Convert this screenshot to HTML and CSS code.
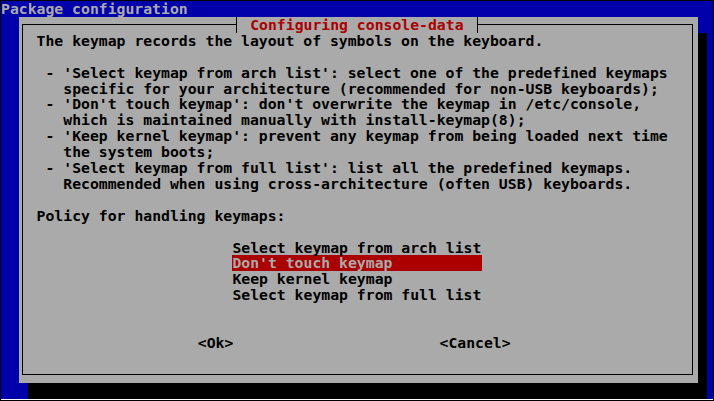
FILE: index.html
```html
<!DOCTYPE html>
<html>
<head>
<meta charset="utf-8">
<link rel="stylesheet" href="styles.css">
</head>
<body>
<div class="screen">
  <div class="backtitle">Package configuration</div>
  <div class="dialog">
    <div class="frame">
      <div class="dtitle">Configuring console-data</div>
      <div class="text">The keymap records the layout of symbols on the keyboard.

 - 'Select keymap from arch list': select one of the predefined keymaps
   specific for your architecture (recommended for non-USB keyboards);
 - 'Don't touch keymap': don't overwrite the keymap in /etc/console,
   which is maintained manually with install-keymap(8);
 - 'Keep kernel keymap': prevent any keymap from being loaded next time
   the system boots;
 - 'Select keymap from full list': list all the predefined keymaps.
   Recommended when using cross-architecture (often USB) keyboards.

Policy for handling keymaps:</div>
      <ul class="menu">
        <li>Select keymap from arch list</li>
        <li class="sel">Don't touch keymap</li>
        <li>Keep kernel keymap</li>
        <li>Select keymap from full list</li>
      </ul>
      <div class="buttons">
        <span class="btn">&lt;Ok&gt;</span>
        <span class="btn">&lt;Cancel&gt;</span>
      </div>
    </div>
  </div>
</div>
<div class="edge"></div>
</body>
</html>
```
FILE: styles.css
```css
html, body {
  margin: 0;
  padding: 0;
  background: #000;
}
body {
  width: 714px;
  height: 401px;
  padding-top: 1px;
  padding-left: 1px;
  box-sizing: border-box;
  overflow: hidden;
  font-family: "DejaVu Sans Mono", monospace;
  font-weight: bold;
  font-size: 14.783px;
  line-height: 15.9px;
}
.screen {
  width: 712px;
  height: 398px;
  background: #0000aa;
  overflow: hidden;
}
.edge {
  width: 712px;
  height: 1px;
  background: #ffffff;
}
.backtitle {
  height: 15.9px;
  color: #aaaaaa;
  white-space: pre;
}
.dialog {
  margin-left: 18px;
  width: 679px;
  height: 366px;
  background: #aaaaaa;
  box-shadow: 9px 16px 0 #000;
  padding-top: 7px;
  box-sizing: border-box;
}
.frame {
  position: relative;
  margin: 0 5px 0 3px;
  height: 351px;
  box-sizing: border-box;
  border: 1px solid #000;
  padding: 7.9px 0 0 13.6px;
}
.dtitle {
  position: absolute;
  top: -8px;
  left: 213px;
  width: 226.8px;
  height: 15.9px;
  padding-left: 13.2px;
  box-sizing: content-box;
  border-left: 1px solid #000;
  border-right: 1px solid #000;
  background: #aaaaaa;
  color: #aa0000;
  white-space: pre;
}
.text {
  color: #000;
  white-space: pre;
}
.menu {
  list-style: none;
  margin: 15.9px 0 0 195.8px;
  padding: 0;
  width: 249.2px;
  color: #000;
}
.menu li {
  height: 15.9px;
  white-space: pre;
}
.menu li.sel {
  background: #aa0000;
  color: #aaaaaa;
}
.buttons {
  display: flex;
  margin-top: 31.8px;
  padding-left: 161.2px;
  gap: 206.2px;
  color: #000;
  white-space: pre;
}
```
